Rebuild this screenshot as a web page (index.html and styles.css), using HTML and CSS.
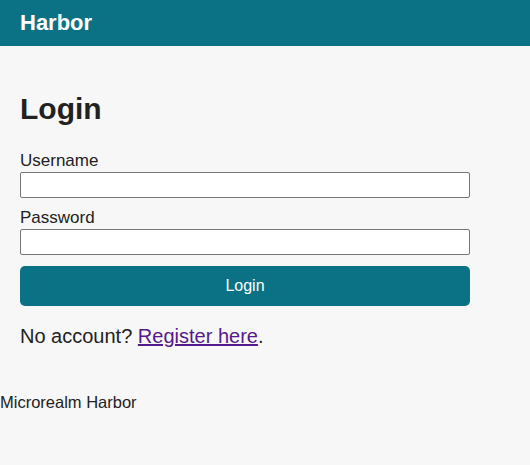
FILE: index.html
```html
<!DOCTYPE html>
<html>
<head>
<meta charset="utf-8">
<title>Harbor - Login</title>
<link rel="stylesheet" href="styles.css">
</head>
<body>
<header class="topbar">
  <span class="brand">Harbor</span>
</header>
<main class="content">
  <h1 class="title">Login</h1>
  <form class="login-form">
    <label class="field-label" for="username">Username</label>
    <input class="field-input" id="username" type="text">
    <label class="field-label" for="password">Password</label>
    <input class="field-input" id="password" type="password">
    <button class="submit" type="button">Login</button>
  </form>
  <p class="register">No account? <a href="#register" class="register-link">Register here</a>.</p>
</main>
<footer class="footer">Microrealm Harbor</footer>
</body>
</html>
```

FILE: styles.css
```css
html, body {
  margin: 0;
  padding: 0;
}
body {
  background: #f7f7f7;
  color: #222;
  font-family: "Liberation Sans", Arial, sans-serif;
}
.topbar {
  background: #0b7285;
  color: #fff;
  height: 46px;
  padding: 0 20px;
  display: flex;
  align-items: center;
  box-sizing: border-box;
}
.brand {
  font-size: 22px;
  line-height: 26px;
  font-weight: bold;
}
.content {
  padding: 20px;
}
.title {
  font-size: 30px;
  line-height: 36px;
  margin: 25px 0 24px;
}
.login-form {
  display: flex;
  flex-direction: column;
  max-width: 450px;
}
.field-label {
  font-size: 17px;
  line-height: 20px;
  margin-bottom: 1px;
}
.field-input {
  height: 26px;
  box-sizing: border-box;
  border: 1px solid #767676;
  border-radius: 2px;
  background: #fff;
  margin: 0 0 10px;
}
.submit {
  margin-top: 1px;
  height: 40px;
  background: #0b7285;
  color: #fff;
  border: none;
  border-radius: 5px;
  font-family: "Liberation Sans", Arial, sans-serif;
  font-size: 16px;
}
.register {
  font-size: 20px;
  line-height: 23px;
  margin: 19px 0 0;
}
.register-link {
  color: #551a8b;
}
.footer {
  font-size: 16.5px;
  line-height: 18px;
  margin-top: 25px;
}
```
